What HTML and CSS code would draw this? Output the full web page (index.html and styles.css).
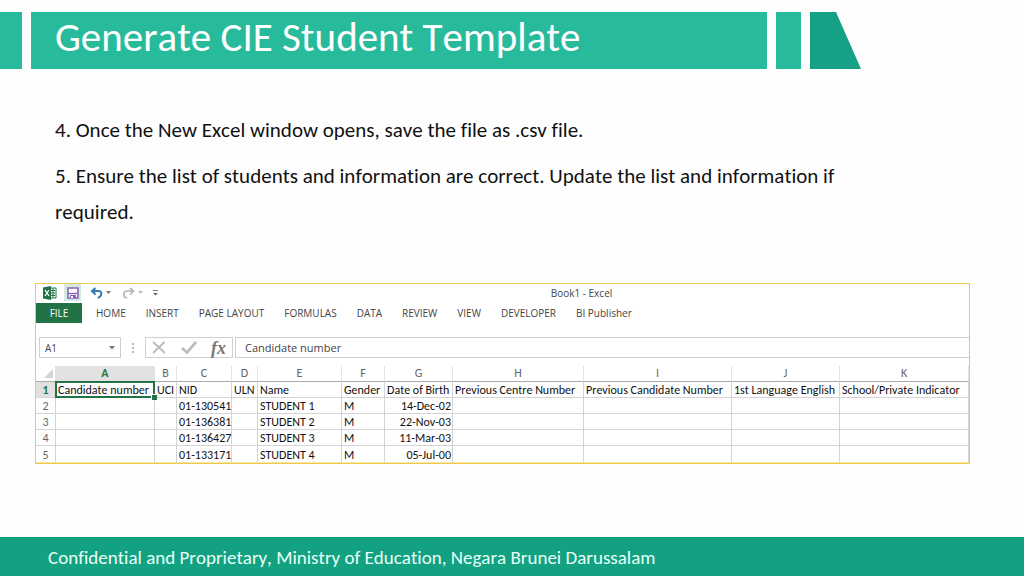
FILE: index.html
```html
<!DOCTYPE html>
<html lang="en">
<head>
<meta charset="utf-8">
<title>Generate CIE Student Template</title>
<link rel="stylesheet" href="styles.css">
</head>
<body>
<header class="banner">
  <div class="block block-start"></div>
  <div class="block block-title"><h1>Generate CIE Student Template</h1></div>
  <div class="block block-small"></div>
  <div class="block block-end"></div>
</header>
<main>
  <section class="steps">
    <p>4. Once the New Excel window opens, save the file as .csv file.</p>
    <p>5. Ensure the list of students and information are correct. Update the list and information if required.</p>
  </section>
  <section class="excel" aria-label="Book1 - Excel">
    <div class="titlebar">
      <div class="quick">
        <svg class="logo" width="14" height="14" viewBox="0 0 14 14"><path d="M7 2h6v10H7z" fill="#fff" stroke="#217346"/><path d="M8 4.500h4M8 7h4M8 9.500h4M10 2v10" stroke="#217346"/><path d="M0 1.500 8 0v14L0 12.500z" fill="#217346"/><path d="m2 4 4 6M6 4l-4 6" stroke="#fff" stroke-width="1.300"/></svg>
        <button class="save" aria-label="Save"><svg width="12" height="12" viewBox="0 0 12 12"><path d="M1 1h10v10H1z" fill="#fff" stroke="#8764b8" stroke-width="1.600"/><path d="M1 6.500h10" stroke="#8764b8" stroke-width="1.400"/><path d="M3 8h6v3H3z" fill="#8764b8"/><path d="M4 9h2v2H4z" fill="#fff"/></svg></button>
        <button class="undo" aria-label="Undo"><svg width="22" height="12" viewBox="0 0 22 12"><path d="M2 4h6c5 0 4 5 0 7M5.500 1 2 4l3.500 3.500" fill="none" stroke="#3579b8" stroke-width="2"/><path d="M16 4h5l-2.500 3z" fill="#777"/></svg></button>
        <button class="redo" aria-label="Redo"><svg width="22" height="12" viewBox="0 0 22 12"><path d="M11 4H6c-6 0-5 6-1 7M8 1l3.500 3L8 7.500" fill="none" stroke="#b5b5b5" stroke-width="1.700"/><path d="M16 4h5l-2.500 3z" fill="#bbb"/></svg></button>
        <button class="more" aria-label="Customize toolbar"><svg width="5" height="6" viewBox="0 0 5 6"><path d="M0 .5h5" stroke="#777"/><path d="M0 3h5L2.500 5.500z" fill="#666"/></svg></button>
      </div>
      <span class="book">Book1 - Excel</span>
    </div>
    <nav class="ribbon">
      <button class="file">FILE</button><button>HOME</button><button>INSERT</button><button>PAGE LAYOUT</button><button>FORMULAS</button><button>DATA</button><button>REVIEW</button><button>VIEW</button><button>DEVELOPER</button><button>BI Publisher</button>
    </nav>
    <div class="formula">
      <div class="namebox"><input aria-label="Name box" value="A1"><svg width="6" height="4" viewBox="0 0 6 4"><path d="M0 0h6L3 3.500z" fill="#777"/></svg></div>
      <svg class="dots" width="2" height="10" viewBox="0 0 2 10"><path d="M0 0h2v2H0zM0 4h2v2H0zM0 8h2v2H0z" fill="#bbb"/></svg>
      <div class="actions">
        <button aria-label="Cancel"><svg width="14" height="13" viewBox="0 0 14 13"><path d="m1 1 12 11M12.500 1 1 12" stroke="#bdbdbd" stroke-width="2"/></svg></button>
        <button aria-label="Enter"><svg width="16" height="13" viewBox="0 0 16 13"><path d="m1 7 5 4.500L15 1" fill="none" stroke="#bdbdbd" stroke-width="2.800"/></svg></button>
        <button class="fx" aria-label="Insert function">fx</button>
      </div>
      <input class="content" aria-label="Formula bar" value="Candidate number">
    </div>
    <table class="sheet">
      <colgroup><col class="w-row"><col class="w-a"><col class="w-b"><col class="w-c"><col class="w-d"><col class="w-e"><col class="w-f"><col class="w-g"><col class="w-h"><col class="w-i"><col class="w-j"><col class="w-k"></colgroup>
      <thead><tr><th class="corner"><svg width="9" height="9" viewBox="0 0 9 9"><path d="M9 0v9H0z" fill="#d4d4d4"/></svg></th><th class="active">A</th><th>B</th><th>C</th><th>D</th><th>E</th><th>F</th><th>G</th><th>H</th><th>I</th><th>J</th><th>K</th></tr></thead>
      <tbody>
        <tr><th class="active">1</th><td class="selected">Candidate number</td><td>UCI</td><td>NID</td><td>ULN</td><td>Name</td><td>Gender</td><td>Date of Birth</td><td>Previous Centre Number</td><td>Previous Candidate Number</td><td>1st Language English</td><td>School/Private Indicator</td></tr>
        <tr><th>2</th><td></td><td></td><td>01-130541</td><td></td><td>STUDENT 1</td><td>M</td><td class="date">14-Dec-02</td><td></td><td></td><td></td><td></td></tr>
        <tr><th>3</th><td></td><td></td><td>01-136381</td><td></td><td>STUDENT 2</td><td>M</td><td class="date">22-Nov-03</td><td></td><td></td><td></td><td></td></tr>
        <tr><th>4</th><td></td><td></td><td>01-136427</td><td></td><td>STUDENT 3</td><td>M</td><td class="date">11-Mar-03</td><td></td><td></td><td></td><td></td></tr>
        <tr><th>5</th><td></td><td></td><td>01-133171</td><td></td><td>STUDENT 4</td><td>M</td><td class="date">05-Jul-00</td><td></td><td></td><td></td><td></td></tr>
      </tbody>
    </table>
  </section>
</main>
<footer class="footer">Confidential and Proprietary, Ministry of Education, Negara Brunei Darussalam</footer>
</body>
</html>
```

FILE: styles.css
```css
* { box-sizing: border-box; }
body {
  margin: 0;
  min-height: 100vh;
  display: flex;
  flex-direction: column;
  background: #fefefe;
  color: #111;
  font-family: Carlito, Lato, sans-serif;
  font-variant-ligatures: none;
  font-kerning: none;
}
button, input { font: inherit; font-kerning: none; color: inherit; border: 0; padding: 0; background: none; }
svg { display: block; }

.banner { display: flex; gap: 9px; padding: 12px 163px 0 0; }
.block { height: 57px; background: #28bb9b; }
.block-start { width: 22px; }
.block-title { flex: 1; padding-left: 24px; }
.block-small { width: 25px; }
.block-end { width: 51px; background: #16a085; clip-path: polygon(0 0, 26px 0, 100% 100%, 0 100%); }
h1 { margin: 0; color: #fff; font-size: 41px; line-height: 50px; font-weight: 400; white-space: nowrap; }

main { flex: 1; }
.steps { padding: 43px 160px 0 55px; font-size: 21px; line-height: 36px; }
.steps p { margin: 0 0 10px; }

.excel { margin: 53px 54px 0 35px; border: 1px solid #efc94a; background: #fff; color: #444; font-family: "Open Sans", sans-serif; font-size: 10px; }
.titlebar { position: relative; height: 19px; }
.quick { display: flex; align-items: center; height: 17px; padding-left: 7px; }
.save { display: grid; place-items: center; width: 17px; height: 17px; margin-left: 7px; background: #d6e9e1; }
.undo { margin-left: 9px; }
.redo { margin-left: 10px; }
.more { margin-left: 9px; }
.book { position: absolute; top: 1px; left: 0; right: 0; padding-left: 158px; text-align: center; line-height: 16px; }
.ribbon { display: flex; gap: 20px; height: 20px; }
.ribbon button { line-height: 20px; white-space: nowrap; }
.ribbon .file { width: 46px; margin-right: -6px; background: #217346; color: #fff; }

.formula { display: flex; align-items: center; padding: 14px 0 0 3px; font-size: 11px; }
.namebox { display: flex; align-items: center; width: 82px; height: 21px; padding: 0 5px; border: 1px solid #cfcfcf; }
.namebox input { flex: 1; min-width: 0; font-size: 10px; }
.dots { margin: 0 11px; }
.actions { display: flex; align-items: center; justify-content: space-between; width: 88px; height: 21px; padding: 0 6px; border: 1px solid #cfcfcf; }
.fx { font: italic 700 18px/18px "Liberation Serif", serif; color: #777; }
.content { flex: 1; height: 21px; margin-left: 2px; padding-left: 9px; border: 1px solid #cfcfcf; border-right: 0; font-size: 11px; }

.sheet { width: 100%; margin-top: 8px; table-layout: fixed; border-collapse: separate; border-spacing: 0; color: #111; font-family: Carlito, Lato, sans-serif; font-size: 12px; }
.w-row { width: 20px; } .w-a { width: 99px; } .w-b { width: 22px; } .w-c { width: 55px; }
.w-d { width: 26px; } .w-e { width: 84px; } .w-f { width: 43px; } .w-g { width: 68px; }
.w-h { width: 131px; } .w-i { width: 148px; } .w-j { width: 108px; } .w-k { width: 129px; }
.sheet th, .sheet td { height: 16px; padding: 2px 2px 0; line-height: 13px; border-right: 1px solid #d4d4d4; border-bottom: 1px solid #d4d4d4; white-space: nowrap; text-align: left; }
.sheet th { padding: 2px 0 0; text-align: center; font-weight: 400; color: #666; }
.sheet thead th { padding: 0; line-height: 15px; border-bottom-color: #aaa; border-right-color: #e4e4e4; }
.sheet .corner svg { margin-left: 8px; }
.sheet th.active { background: #e1e1e1; color: #217346; font-weight: 700; }
.sheet .date { text-align: right; padding-right: 1px; }
.sheet .selected { position: relative; }
.selected::before { content: ""; position: absolute; inset: -1px; border: 2px solid #217346; }
.selected::after { content: ""; position: absolute; right: -3px; bottom: -3px; width: 5px; height: 5px; background: #217346; border: 1px solid #fff; border-width: 1px 0 0 1px; }
.sheet tbody tr:last-child > * { height: 17px; border-bottom-color: #f6e6a8; }

.footer { height: 39px; padding-left: 48px; background: #12a282; color: #e8fff8; font-size: 19px; line-height: 42px; }
```
